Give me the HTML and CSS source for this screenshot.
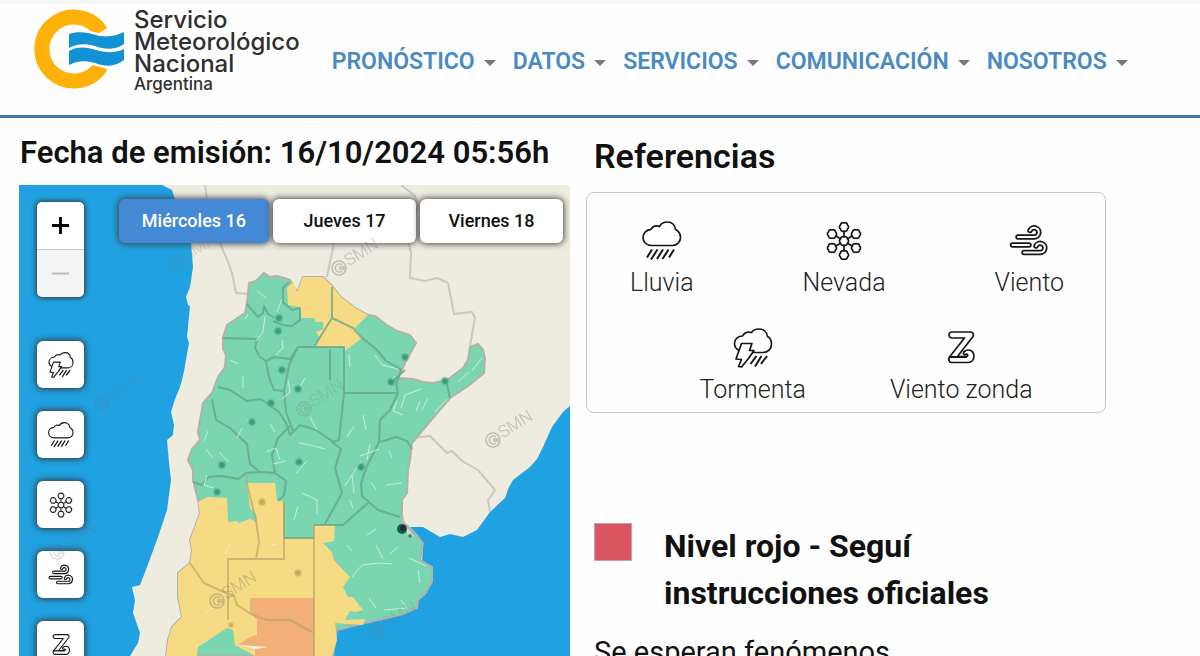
FILE: index.html
```html
<!DOCTYPE html>
<html lang="es">
<head>
<meta charset="utf-8">
<meta name="viewport" content="width=device-width, initial-scale=1">
<title>Alertas - Servicio Meteorológico Nacional</title>
<link rel="stylesheet" href="styles.css">
</head>
<body>
<svg class="sprite" width="0" height="0" aria-hidden="true">
  <defs>
    <symbol id="rain" viewBox="0 0 40 40">
      <path class="line" d="M10 24.500C4 24.500 1 20.500 1 16.500C1 12 4.500 8.500 9 8.300C10.500 5 14.500 4 17.500 5.500C19 2.500 22 1 25.500 1C30 1 33.500 4.500 33.500 8.500C36.500 10 38.500 13 38.500 16.500C38.500 21 35 24.500 30.500 24.500Z"/>
      <path class="drops" d="M10 28.500L5 36.500M15.500 28.500L9 38.500M21 28.500L15 38M26.500 28.500L20.500 38M32 28.500L27 36.500"/>
    </symbol>
    <symbol id="storm" viewBox="0 0 40 40">
      <path class="line" d="M6 22.500C3 21 1.500 18.500 1.500 15.500C1.500 11 5 8 9.500 8C11.500 4.500 15 3.500 18.500 4.500C20 2 22.500 1 26 1C30.500 1 34 4 34.500 8.500C37.500 10 38.500 12.500 38.500 16C38.500 21 35 24.500 30 24.500H20"/>
      <path class="line" d="M8.500 15.500H19L16.500 22.500H21L15.500 30.500L8.500 39L5.500 38.500L8.500 31.500L3 31Z"/>
      <path class="drops" d="M23.500 28L17.500 36M28.500 28L22 38.500M34 28L28 36"/>
    </symbol>
    <path id="flake" d="M0 -4A2.400 2.400 0 0 1 3.500 -2A2.400 2.400 0 0 1 3.500 2A2.400 2.400 0 0 1 0 4A2.400 2.400 0 0 1 -3.500 2A2.400 2.400 0 0 1 -3.500 -2A2.400 2.400 0 0 1 0 -4Z"/>
    <symbol id="snow" viewBox="0 0 40 40">
      <path class="line" d="M20 11V15M20 25V29M24 17.500L28 15M12 25L16 22.500M12 15L16 17.500M24 22.500L28 25"/>
      <g class="flakes">
        <use href="#flake" x="20" y="20"/><use href="#flake" x="20" y="6"/><use href="#flake" x="32" y="13"/><use href="#flake" x="32" y="27"/><use href="#flake" x="20" y="34"/><use href="#flake" x="8" y="27"/><use href="#flake" x="8" y="13"/>
      </g>
    </symbol>
    <symbol id="wind" viewBox="0 0 40 40">
      <g class="tube"><path d="M9 16H25A4.600 4.600 0 1 0 21 9.500M3.500 24H20M15 31.500H31A4.600 4.600 0 1 0 27 25"/></g>
      <g class="tube-fill"><path d="M9 16H25A4.600 4.600 0 1 0 21 9.500M3.500 24H20M15 31.500H31A4.600 4.600 0 1 0 27 25"/></g>
    </symbol>
    <symbol id="zonda" viewBox="0 0 40 40">
      <path class="line" d="M11 4H30A3 3 0 0 1 32 8.500L16.500 28.500H25C26 28.500 27.500 27.500 26.500 26.500C25.500 25.500 24 27 23 26.500C21 24.500 24.500 22 27.500 22C31 22 33 25 33 28C33 32 30.500 34.500 27 34.500H10.500C8 34.500 7 31 8.500 29L23.500 10H11A3 3 0 0 1 11 4Z"/>
      <path class="drops" d="M8.500 29H26"/>
    </symbol>
    <g id="mark">
      <circle r="7"/><path d="M3 -3A4 4 0 1 0 3 3M0 -1H6M0 1H6"/>
      <text x="9" y="4" transform="rotate(-32)">SMN</text>
    </g>
  </defs>
</svg>

<div class="page">
  <header class="header">
    <a class="brand" href="#" aria-label="Servicio Meteorológico Nacional Argentina">
      <svg class="brand-logo" viewBox="0 0 92 80" aria-hidden="true">
        <path d="M67 23A32 32 0 1 0 67 57" fill="none" stroke="#fdb109" stroke-width="15"/>
        <path d="M35 25C43 22 53 23 62 26C72 29 82 27 90 23V51C81 58 72 58 61 54C50 51 42 52 35 56Z" fill="#fff" stroke="#fff" stroke-width="5"/>
        <path d="M35 25C43 22 53 23 62 26C72 29 82 27 90 23V35C81 41 72 41 61 37C50 34 42 35 35 39ZM35 42C43 37 53 38 62 41C72 44 82 44 90 40V51C81 58 72 58 61 54C50 51 42 52 35 56Z" fill="#1291d4"/>
      </svg>
      <span class="brand-name">Servicio<br>Meteorológico<br>Nacional<small>Argentina</small></span>
    </a>
    <nav class="nav" aria-label="Principal">
      <a href="#">PRONÓSTICO</a>
      <a href="#">DATOS</a>
      <a href="#">SERVICIOS</a>
      <a href="#">COMUNICACIÓN</a>
      <a href="#">NOSOTROS</a>
    </nav>
  </header>

  <main class="content">
    <section class="alerts">
      <h1 class="issued">Fecha de emisión: 16/10/2024 05:56h</h1>
      <div class="map">
        <svg class="map-layer" viewBox="19 185 551 471" preserveAspectRatio="xMinYMin slice" role="img" aria-label="Mapa de alertas">
          <rect x="19" y="185" width="551" height="900" fill="#20a1e1"/>
          <path fill="#eeebdf" d="M162 185L172 190L180 215L191 243L193 267L190 287L186 297L188 305L190 306L187 337L189 343L184 371L182 380L180 387L175 399L171 412L174 425L173 435L167 440L169 463L171 480L167 510L158 537L147 567L140 585L132 587L135 600L133 613L140 633L138 643L130 656H333L337 630L365 623L400 615L417 608L418 600L432 582L432 567L422 563L423 543L415 533L410 527L423 527L440 537L450 534L463 537L477 530L490 512L505 498L509 487L513 480L530 467L537 459L543 447L552 427L563 412L570 406V185Z"/>
          <path class="frontier" d="M205 185L207 200L220 243L228 262L232 273L236 293L248 294M327 277L333 248L335 230M401 185L415 196L418 206L408 240L411 253L410 278L425 281L437 278L448 283L454 314L472 312L475 318L470 346M412 438L430 436L447 453L452 451L462 461L478 470L495 490L488 500L490 512"/>
          <path class="green edge" d="M264 273L270 277L277 276L284 278L290 280L297 292L303 277L323 277L333 287L341 297L355 308L368 315L375 316L387 325L397 331L410 335L416 343L405 363L398 378L413 379L423 382L433 383L447 380L463 368L468 360L470 347L478 344L483 350L485 358L484 373L467 387L450 398L433 418L412 443L410 460L408 470L407 493L402 500L402 515L403 522L415 533L423 543L420 560L432 567L432 582L425 594L418 600L417 608L400 615L365 623L337 630L333 656H166L168 640L172 627L182 617L178 597L178 573L190 563L192 550L190 540L200 513L198 500L193 480L193 470L188 460L192 449L200 440L198 432L200 420L203 403L212 393L218 377L225 367L226 355L223 349V337L227 325L245 313L247 303L249 283L256 281Z"/>
          <path class="yellow" d="M198 502L207 497L227 498L228 522L237 521L239 523L250 519L257 522L256 514L250 508L247 483L275 483L277 500L284 502L284 538H314V525H335L334 541L323 543L332 552L334 560L342 569L350 577L343 587L348 597L353 597L363 610L356 612L350 611L345 620L365 619L363 625L335 623L337 640L332 656H255L235 645L233 630L227 628L198 647L197 656H166L168 640L172 627L182 617L178 597V573L190 563L192 550L190 540L200 513ZM293 282L297 292L303 277H323L333 287L341 297L355 308L368 315L355 328L362 338L345 351V347H314L320 338L316 332L323 329V322H315V318H301L300 307L288 305L287 288Z"/>
          <path class="orange" d="M250 598H314V656H255V648L238 645L250 637L257 635V620L250 612Z"/>
          <path fill="#f7f0e8" d="M238 645L268 647L255 649Z"/>
          <g class="province">
            <path d="M223 338L257 339L255 348L260 357L266 361L274 357L290 359L298 347H344V393H398L395 379L405 370M344 393L339 440L332 442L341 449L335 468L342 493L325 524M332 287V318L353 328L362 338L376 349L386 361L402 370M332 318L314 347M330 349V380M289 282L283 288L283 302L292 310L300 308V320L292 326L283 325L273 321M247 304L258 317L263 313L264 306L268 314L275 318M218 387L230 390L247 401L261 399L279 412L286 423L290 435L300 425L316 430L326 437L335 443M212 399L216 420L230 428L247 444L250 464L260 472L246 473L238 479L222 476L208 477L202 485L193 482M266 361L269 377L274 390L284 391L289 365L298 347M284 391L286 412L293 431M260 472L275 473L286 481L284 495L278 501M275 473L272 455L278 438L290 426M284 502V538H314M398 393L390 410L380 420L379 442L367 466L361 483L362 496L378 510L400 517M380 442L396 437L407 441L412 449M368 503L360 510L343 525H314M401 370L396 385M446 380L450 398"/>
          </g>
          <path class="province on-yellow" d="M246 473L247 484L256 520L259 542L256 560M284 502V559H228V620M314 525V656M190 563L204 583L226 593L234 596L237 605L251 614L267 620L290 620L314 633"/>
          <path class="road" d="M257 291L266 298M282 299L277 312M248 314L245 319M265 316L263 332L256 341M282 340L283 348L276 355M230 360L238 364M243 376V388M247 420L255 425M288 380L290 392L282 399M300 387L305 378M270 424L275 432M242 428L237 438M208 431L204 441M207 475L204 485L213 488M266 452L276 448L280 460M273 464L286 461M219 452L229 462M206 449L213 458M310 417L317 430M299 443L310 445L325 449M307 461L296 473M302 493L317 500V514M294 520L298 506M349 355L350 367M375 355L382 365L398 369M395 376L388 384M397 401L393 411L403 415M420 401L416 411M422 410L428 398M435 412L447 399M401 408L405 395L421 389M458 382L469 372M472 371L482 358M363 415L366 430M354 426L347 437M370 444L367 460M360 456L379 449M361 461L345 486M352 475L354 493M389 450L392 458M386 485L402 483M371 482L376 490M350 500L353 508M376 529L367 535M347 545L352 551M390 554L398 547M376 545L383 559M352 577L362 565L379 563L392 564M409 558L426 566M418 570L420 583M369 598L376 608M401 600L407 608L384 610M230 545L225 554M289 569L296 577M205 612L213 608M270 544L276 545"/>
          <g class="city"><circle cx="279" cy="318" r="3"/><circle cx="278" cy="331" r="3"/><circle cx="282" cy="370" r="3"/><circle cx="298" cy="389" r="3"/><circle cx="271" cy="403" r="3"/><circle cx="252" cy="422" r="3"/><circle cx="222" cy="465" r="3"/><circle cx="217" cy="492" r="3"/><circle cx="299" cy="462" r="3"/><circle cx="361" cy="467" r="3"/><circle cx="405" cy="357" r="3"/><circle cx="391" cy="382" r="3"/><circle cx="445" cy="381" r="3"/></g>
          <g class="city sand"><circle cx="262" cy="502" r="3"/><circle cx="298" cy="573" r="3"/><circle cx="231" cy="625" r="2"/></g>
          <path d="M403 523L414 536L409 538Z" fill="#d4dbe5"/>
          <circle cx="402" cy="529" r="5" fill="#1d5c4d"/><circle cx="403" cy="528" r="3" fill="#282a33"/><circle cx="410" cy="536" r="2" fill="#68777a"/>
        </svg>

        <div class="map-ui">
          <div class="tools">
            <div class="zoom">
              <button type="button" aria-label="Acercar"><svg viewBox="0 0 20 20"><path d="M1 10H19M10 1V19" stroke="#000" stroke-width="3"/></svg></button>
              <button type="button" aria-label="Alejar" disabled><svg viewBox="0 0 20 20"><path d="M1 10H19" stroke="#bbb" stroke-width="2"/></svg></button>
            </div>
            <button class="tool" type="button" aria-label="Tormenta"><svg class="icon"><use href="#storm"/></svg></button>
            <button class="tool" type="button" aria-label="Lluvia"><svg class="icon"><use href="#rain"/></svg></button>
            <button class="tool" type="button" aria-label="Nevada"><svg class="icon"><use href="#snow"/></svg></button>
            <button class="tool" type="button" aria-label="Viento"><svg class="icon"><use href="#wind"/></svg></button>
            <button class="tool" type="button" aria-label="Viento zonda"><svg class="icon"><use href="#zonda"/></svg></button>
          </div>
          <div class="days">
            <button class="day active" type="button" aria-pressed="true">Miércoles 16</button>
            <button class="day" type="button">Jueves 17</button>
            <button class="day" type="button">Viernes 18</button>
          </div>
        </div>

        <svg class="map-layer marks" viewBox="19 185 551 471" preserveAspectRatio="xMinYMin slice" aria-hidden="true">
          <use href="#mark" x="339" y="268"/><use href="#mark" x="493" y="440"/><use href="#mark" x="217" y="601"/><use href="#mark" x="304" y="409" opacity=".6"/>
          <g opacity=".6"><use href="#mark" x="177" y="263"/><use href="#mark" x="102" y="403"/><use href="#mark" x="57" y="552"/><use href="#mark" x="377" y="631"/></g>
        </svg>
      </div>
    </section>

    <aside class="info">
      <h2 class="info-title">Referencias</h2>
      <div class="legend">
        <div class="legend-row">
          <div class="ref"><svg class="icon"><use href="#rain"/></svg><span>Lluvia</span></div>
          <div class="ref"><svg class="icon"><use href="#snow"/></svg><span>Nevada</span></div>
          <div class="ref"><svg class="icon"><use href="#wind"/></svg><span>Viento</span></div>
        </div>
        <div class="legend-row centered">
          <div class="ref"><svg class="icon"><use href="#storm"/></svg><span>Tormenta</span></div>
          <div class="ref"><svg class="icon"><use href="#zonda"/></svg><span>Viento zonda</span></div>
        </div>
      </div>
      <article class="level">
        <div class="level-head">
          <span class="swatch"></span>
          <h3>Nivel rojo - Seguí instrucciones oficiales</h3>
        </div>
        <p>Se esperan fenómenos</p>
      </article>
    </aside>
  </main>
</div>
</body>
</html>
```
FILE: styles.css
```css
* { box-sizing: border-box; }
body {
  margin: 0;
  background: #fefefe;
  color: #111;
  font-family: Roboto, "Liberation Sans", sans-serif;
}
h1, h2, h3, p { margin: 0; }
button { font: inherit; padding: 0; border: 0; cursor: pointer; }
.sprite { position: absolute; }

.page {
  display: flex;
  flex-direction: column;
  height: 100vh;
  overflow: hidden;
}

/* Header */
.header {
  display: flex;
  flex: none;
  gap: 32px;
  padding: 5px 32px 21px 34px;
  border-top: 4px solid #f5f5f5;
  border-bottom: 3px solid #3f7ca8;
}
.brand {
  display: flex;
  gap: 8px;
  color: #2f2f2f;
  text-decoration: none;
}
.brand-logo { width: 92px; height: 80px; }
.brand-name {
  font: 500 24px/22px Inter, "Liberation Sans", sans-serif;
}
.brand-name small {
  display: block;
  font-size: 17px;
  line-height: 19px;
}
.nav {
  display: flex;
  align-items: center;
  align-self: flex-start;
  gap: 17px;
  padding-top: 39px;
}
.nav a {
  display: flex;
  align-items: center;
  gap: 9px;
  color: #4a8ac4;
  font-size: 23px;
  font-weight: 600;
  line-height: 28px;
  text-decoration: none;
}
.nav a::after {
  content: "";
  margin-top: 2px;
  border: 6px solid transparent;
  border-top-color: #777;
  border-bottom: 0;
}

/* Layout */
.content {
  display: grid;
  flex: 1;
  min-height: 0;
  grid-template-columns: minmax(0, 551fr) minmax(0, 520fr);
  grid-template-rows: minmax(0, 1fr);
  gap: 16px;
  padding: 0 94px 0 19px;
}
.alerts { display: flex; flex-direction: column; min-height: 0; }
.issued {
  padding: 17px 0 14px 1px;
  font-size: 31px;
  font-weight: 600;
  line-height: 36px;
  white-space: nowrap;
}

/* Map */
.map { display: grid; flex: 1; min-height: 0; overflow: hidden; position: relative; }
.map-layer { position: absolute; inset: 0; width: 100%; height: 100%; }
.map-ui {
  position: relative;
  display: flex;
  justify-content: space-between;
  align-items: flex-start;
  padding: 14px 7px 0 18px;
}
.green { fill: #79d6b0; }
.yellow { fill: #f7db84; }
.orange { fill: #f2b077; }
.edge, .frontier, .province { stroke: #b2b1aa; stroke-width: 2; stroke-linejoin: round; }
.frontier, .province, .road { fill: none; }
.frontier { stroke: #c9c8c1; }
.province { stroke: #5f9f86; stroke-opacity: .7; }
.on-yellow { stroke: #b9a768; }
.road { stroke: #d9f5e2; stroke-width: 1; stroke-opacity: .8; }
.city { fill: #38997b; stroke: #52ae8c; stroke-opacity: .4; stroke-width: 3; }
.sand { fill: #c9a657; stroke: #dcb965; }
.marks { opacity: .4; fill: none; stroke: #777; stroke-width: 1.5; pointer-events: none; }
#mark { fill: none; }
#mark text { fill: #777; stroke: none; font: 300 17px Roboto, sans-serif; }

.tools { display: flex; flex-direction: column; gap: 23px; padding-top: 3px; }
.zoom {
  margin-bottom: 21px;
  overflow: hidden;
  border-radius: 5px;
  box-shadow: 0 0 5px 1px #333;
}
.zoom button {
  display: grid;
  place-items: center;
  width: 47px;
  height: 47px;
  background: #fff;
}
.zoom button + button { height: 48px; background: #f4f4f4; border-top: 1px solid #ccc; }
.zoom svg { width: 19px; height: 19px; }
.tool {
  display: grid;
  place-items: center;
  width: 47px;
  height: 47px;
  border-radius: 6px;
  background: #fff;
  box-shadow: 0 0 6px 1px #333;
}
.tool .icon { width: 26px; height: 26px; }
.days { display: flex; gap: 4px; }
.day {
  min-width: 143px;
  height: 44px;
  padding: 0 23px 2px;
  border-radius: 6px;
  background: #fff;
  color: #111;
  font-size: 18px;
  font-weight: 500;
  box-shadow: 0 0 6px 1px #444;
}
.day.active { background: #4489d6; color: #fff; }

/* Icons */
.icon { width: 40px; height: 40px; color: #161616; }
.line, .drops, .flakes, .tube, .tube-fill { fill: none; stroke: currentColor; stroke-width: 1.7; stroke-linejoin: round; }
.line { fill: #fff; }
.drops { stroke-width: 2; }
.flakes { fill: #fff; }
.tube { stroke-width: 5.5; stroke-linecap: round; }
.tube-fill { stroke: #fff; stroke-width: 2; stroke-linecap: round; }

/* Legend */
.info-title {
  padding: 18px 0 16px 8px;
  font-size: 34px;
  font-weight: 600;
  line-height: 40px;
}
.legend {
  display: flex;
  flex-direction: column;
  gap: 29px;
  padding: 28px 41px 6px 43px;
  border: 1px solid #c8c8c8;
  border-radius: 8px;
}
.legend-row { display: flex; justify-content: space-between; }
.legend-row.centered { justify-content: center; gap: 84px; padding-left: 38px; }
.ref {
  display: flex;
  flex-direction: column;
  align-items: center;
  gap: 6px;
  color: #222;
  font-size: 25px;
  font-weight: 300;
  line-height: 32px;
  white-space: nowrap;
}
.level { padding: 110px 94px 0 8px; }
.level-head { display: flex; gap: 32px; }
.swatch {
  flex: none;
  width: 38px;
  height: 38px;
  border: 1px solid #c9a0a5;
  background: #db5461;
}
.level h3 { font-size: 32px; font-weight: 700; line-height: 47px; }
.level p {
  padding-top: 12px;
  font-size: 29px;
  line-height: 47px;
  white-space: nowrap;
}
```
